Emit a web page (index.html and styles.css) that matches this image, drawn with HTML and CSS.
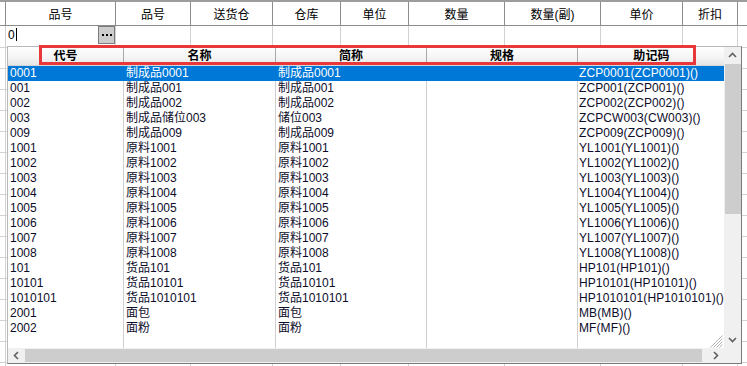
FILE: index.html
```html
<!DOCTYPE html>
<html lang="zh-CN">
<head>
<meta charset="utf-8">
<title>选择品号</title>
<link rel="stylesheet" href="styles.css">
</head>
<body>
<div class="sheet">
  <div class="row head">
    <div class="c gut"></div>
    <div class="c">品号</div>
    <div class="c">品号</div>
    <div class="c">送货仓</div>
    <div class="c">仓库</div>
    <div class="c">单位</div>
    <div class="c">数量</div>
    <div class="c">数量(副)</div>
    <div class="c">单价</div>
    <div class="c">折扣</div>
    <div class="c"></div>
  </div>
  <div class="row inp">
    <div class="c gut"></div>
    <div class="c edit"><span class="val">0</span><span class="caret"></span><span class="btn"><svg width="15" height="16" viewBox="0 0 15 16"><rect x="3" y="7" width="2" height="2" fill="#000"/><rect x="7" y="7" width="2" height="2" fill="#000"/><rect x="11" y="7" width="2" height="2" fill="#000"/></svg></span></div>
    <div class="c"></div><div class="c"></div><div class="c"></div><div class="c"></div><div class="c"></div><div class="c"></div><div class="c"></div><div class="c"></div><div class="c"></div>
  </div>
  <div class="row"><div class="c gut"></div><div class="c"></div><div class="c"></div><div class="c"></div><div class="c"></div><div class="c"></div><div class="c"></div><div class="c"></div><div class="c"></div><div class="c"></div><div class="c"></div></div>
  <div class="row"><div class="c gut"></div><div class="c"></div><div class="c"></div><div class="c"></div><div class="c"></div><div class="c"></div><div class="c"></div><div class="c"></div><div class="c"></div><div class="c"></div><div class="c"></div></div>
  <div class="row"><div class="c gut"></div><div class="c"></div><div class="c"></div><div class="c"></div><div class="c"></div><div class="c"></div><div class="c"></div><div class="c"></div><div class="c"></div><div class="c"></div><div class="c"></div></div>
  <div class="row"><div class="c gut"></div><div class="c"></div><div class="c"></div><div class="c"></div><div class="c"></div><div class="c"></div><div class="c"></div><div class="c"></div><div class="c"></div><div class="c"></div><div class="c"></div></div>
  <div class="row"><div class="c gut"></div><div class="c"></div><div class="c"></div><div class="c"></div><div class="c"></div><div class="c"></div><div class="c"></div><div class="c"></div><div class="c"></div><div class="c"></div><div class="c"></div></div>
  <div class="row"><div class="c gut"></div><div class="c"></div><div class="c"></div><div class="c"></div><div class="c"></div><div class="c"></div><div class="c"></div><div class="c"></div><div class="c"></div><div class="c"></div><div class="c"></div></div>
  <div class="row"><div class="c gut"></div><div class="c"></div><div class="c"></div><div class="c"></div><div class="c"></div><div class="c"></div><div class="c"></div><div class="c"></div><div class="c"></div><div class="c"></div><div class="c"></div></div>
  <div class="row"><div class="c gut"></div><div class="c"></div><div class="c"></div><div class="c"></div><div class="c"></div><div class="c"></div><div class="c"></div><div class="c"></div><div class="c"></div><div class="c"></div><div class="c"></div></div>
  <div class="row"><div class="c gut"></div><div class="c"></div><div class="c"></div><div class="c"></div><div class="c"></div><div class="c"></div><div class="c"></div><div class="c"></div><div class="c"></div><div class="c"></div><div class="c"></div></div>
  <div class="row"><div class="c gut"></div><div class="c"></div><div class="c"></div><div class="c"></div><div class="c"></div><div class="c"></div><div class="c"></div><div class="c"></div><div class="c"></div><div class="c"></div><div class="c"></div></div>
  <div class="row"><div class="c gut"></div><div class="c"></div><div class="c"></div><div class="c"></div><div class="c"></div><div class="c"></div><div class="c"></div><div class="c"></div><div class="c"></div><div class="c"></div><div class="c"></div></div>
  <div class="row"><div class="c gut"></div><div class="c"></div><div class="c"></div><div class="c"></div><div class="c"></div><div class="c"></div><div class="c"></div><div class="c"></div><div class="c"></div><div class="c"></div><div class="c"></div></div>
  <div class="row"><div class="c gut"></div><div class="c"></div><div class="c"></div><div class="c"></div><div class="c"></div><div class="c"></div><div class="c"></div><div class="c"></div><div class="c"></div><div class="c"></div><div class="c"></div></div>
  <div class="row"><div class="c gut"></div><div class="c"></div><div class="c"></div><div class="c"></div><div class="c"></div><div class="c"></div><div class="c"></div><div class="c"></div><div class="c"></div><div class="c"></div><div class="c"></div></div>
  <div class="row"><div class="c gut"></div><div class="c"></div><div class="c"></div><div class="c"></div><div class="c"></div><div class="c"></div><div class="c"></div><div class="c"></div><div class="c"></div><div class="c"></div><div class="c"></div></div>
  <div class="row"><div class="c gut"></div><div class="c"></div><div class="c"></div><div class="c"></div><div class="c"></div><div class="c"></div><div class="c"></div><div class="c"></div><div class="c"></div><div class="c"></div><div class="c"></div></div>

  <div class="drop">
    <div class="list">
      <div class="dhead">
        <div class="dc k1">代号</div><div class="dc k2">名称</div><div class="dc k3">简称</div><div class="dc k4">规格</div><div class="dc k5">助记码</div>
      </div>
      <div class="drow sel"><div class="dc k1">0001</div><div class="dc k2">制成品0001</div><div class="dc k3">制成品0001</div><div class="dc k4"></div><div class="dc k5">ZCP0001(ZCP0001)()</div></div>
      <div class="drow"><div class="dc k1">001</div><div class="dc k2">制成品001</div><div class="dc k3">制成品001</div><div class="dc k4"></div><div class="dc k5">ZCP001(ZCP001)()</div></div>
      <div class="drow"><div class="dc k1">002</div><div class="dc k2">制成品002</div><div class="dc k3">制成品002</div><div class="dc k4"></div><div class="dc k5">ZCP002(ZCP002)()</div></div>
      <div class="drow"><div class="dc k1">003</div><div class="dc k2">制成品储位003</div><div class="dc k3">储位003</div><div class="dc k4"></div><div class="dc k5">ZCPCW003(CW003)()</div></div>
      <div class="drow"><div class="dc k1">009</div><div class="dc k2">制成品009</div><div class="dc k3">制成品009</div><div class="dc k4"></div><div class="dc k5">ZCP009(ZCP009)()</div></div>
      <div class="drow"><div class="dc k1">1001</div><div class="dc k2">原料1001</div><div class="dc k3">原料1001</div><div class="dc k4"></div><div class="dc k5">YL1001(YL1001)()</div></div>
      <div class="drow"><div class="dc k1">1002</div><div class="dc k2">原料1002</div><div class="dc k3">原料1002</div><div class="dc k4"></div><div class="dc k5">YL1002(YL1002)()</div></div>
      <div class="drow"><div class="dc k1">1003</div><div class="dc k2">原料1003</div><div class="dc k3">原料1003</div><div class="dc k4"></div><div class="dc k5">YL1003(YL1003)()</div></div>
      <div class="drow"><div class="dc k1">1004</div><div class="dc k2">原料1004</div><div class="dc k3">原料1004</div><div class="dc k4"></div><div class="dc k5">YL1004(YL1004)()</div></div>
      <div class="drow"><div class="dc k1">1005</div><div class="dc k2">原料1005</div><div class="dc k3">原料1005</div><div class="dc k4"></div><div class="dc k5">YL1005(YL1005)()</div></div>
      <div class="drow"><div class="dc k1">1006</div><div class="dc k2">原料1006</div><div class="dc k3">原料1006</div><div class="dc k4"></div><div class="dc k5">YL1006(YL1006)()</div></div>
      <div class="drow"><div class="dc k1">1007</div><div class="dc k2">原料1007</div><div class="dc k3">原料1007</div><div class="dc k4"></div><div class="dc k5">YL1007(YL1007)()</div></div>
      <div class="drow"><div class="dc k1">1008</div><div class="dc k2">原料1008</div><div class="dc k3">原料1008</div><div class="dc k4"></div><div class="dc k5">YL1008(YL1008)()</div></div>
      <div class="drow"><div class="dc k1">101</div><div class="dc k2">货品101</div><div class="dc k3">货品101</div><div class="dc k4"></div><div class="dc k5">HP101(HP101)()</div></div>
      <div class="drow"><div class="dc k1">10101</div><div class="dc k2">货品10101</div><div class="dc k3">货品10101</div><div class="dc k4"></div><div class="dc k5">HP10101(HP10101)()</div></div>
      <div class="drow"><div class="dc k1">1010101</div><div class="dc k2">货品1010101</div><div class="dc k3">货品1010101</div><div class="dc k4"></div><div class="dc k5">HP1010101(HP1010101)()</div></div>
      <div class="drow"><div class="dc k1">2001</div><div class="dc k2">面包</div><div class="dc k3">面包</div><div class="dc k4"></div><div class="dc k5">MB(MB)()</div></div>
      <div class="drow"><div class="dc k1">2002</div><div class="dc k2">面粉</div><div class="dc k3">面粉</div><div class="dc k4"></div><div class="dc k5">MF(MF)()</div></div>
      <div class="fill"><div class="dc k1"></div><div class="dc k2"></div><div class="dc k3"></div><div class="dc k4"></div><div class="dc k5"></div></div>
      <svg class="grip" width="15" height="15" viewBox="0 0 15 15"><g stroke="#b4b4b4" stroke-width="1"><line x1="14.5" y1="2.5" x2="2.5" y2="14.5"/><line x1="14.5" y1="5.5" x2="5.5" y2="14.5"/><line x1="14.5" y1="8.5" x2="8.5" y2="14.5"/><line x1="14.5" y1="11.5" x2="11.5" y2="14.5"/></g></svg>
    </div>
    <div class="vscroll">
      <div class="arr"><svg width="17" height="17" viewBox="0 0 17 17"><polyline points="5,10 8.5,6.5 12,10" fill="none" stroke="#606060" stroke-width="1.6"/></svg></div>
      <div class="vtrack"><div class="vthumb"></div></div>
      <div class="arr"><svg width="17" height="17" viewBox="0 0 17 17"><polyline points="5,7 8.5,10.5 12,7" fill="none" stroke="#606060" stroke-width="1.6"/></svg></div>
    </div>
    <div class="hscroll">
      <div class="harr"><svg width="17" height="15" viewBox="0 0 17 15"><polyline points="10,4 6.5,7.5 10,11" fill="none" stroke="#606060" stroke-width="1.6"/></svg></div>
      <div class="hthumb"></div>
      <div class="harr"><svg width="17" height="15" viewBox="0 0 17 15"><polyline points="7,4 10.5,7.5 7,11" fill="none" stroke="#606060" stroke-width="1.6"/></svg></div>
    </div>
    <div class="corner"></div>
  </div>
  <div class="mark"></div>
</div>
</body>
</html>
```

FILE: styles.css
```css
* { box-sizing: border-box; margin: 0; padding: 0; }
html, body { width: 747px; height: 366px; overflow: hidden; background: #fff; }
body {
  font-family: "Liberation Sans", "Noto Sans CJK SC", sans-serif;
  font-size: 12px;
  color: #000;
}
.sheet {
  position: relative;
  width: 747px;
  height: 366px;
  border-top: 2px solid #9c9c9c;
  overflow: hidden;
}
.row {
  display: grid;
  grid-template-columns: 5px 110px 75px 82px 68px 68px 96px 96px 82px 55px 10px;
  height: 21px;
}
.row > .c {
  border-left: 1px solid #d2d2d2;
  border-bottom: 1px solid #d2d2d2;
}
.row > .c.gut { border-left: 0; }
.head { height: 24px; }
.head > .c {
  border-left-color: #8c8c8c;
  border-bottom-color: #8c8c8c;
  display: flex;
  align-items: center;
  justify-content: center;
  padding-top: 3px;
  line-height: 14px;
}
.inp { height: 22px; }
.edit {
  display: flex;
  align-items: flex-start;
  padding-left: 2px;
}
.val { line-height: 15px; margin-top: 2px; }
.caret {
  width: 1px;
  height: 13px;
  margin-top: 2px;
  margin-left: 1px;
  background: #000;
}
.btn {
  margin-left: auto;
  width: 17px;
  height: 18px;
  background: #cdcdcd;
  border: 1px solid #7c7c7c;
  display: flex;
}

/* dropdown */
.drop {
  position: absolute;
  left: 7px;
  top: 44px;
  width: 735px;
  height: 318px;
  border: 1px solid #7a7a7a;
  border-left-color: #b8b8b8;
  border-top-color: #b8b8b8;
  background: #fff;
  display: grid;
  grid-template-columns: 1fr 17px;
  grid-template-rows: 1fr 15px;
}
.list {
  position: relative;
  display: flex;
  flex-direction: column;
  overflow: hidden;
}
.dhead, .drow, .fill { display: flex; flex: none; }
.dhead {
  height: 19px;
  background: linear-gradient(#ffffff, #f4f4f4 60%, #e6e6e6);
  border-bottom: 1px solid #d6d6d6;
}
.dhead .dc {
  font-weight: bold;
  text-align: center;
  line-height: 19px;
  padding: 0;
  border-right: 1px solid #a8a8a8;
}
.dhead .dc.k5 { border-right: 0; }
.drow { height: 15px; }
.dc {
  flex: none;
  line-height: 15px;
  padding-left: 2px;
  white-space: nowrap;
  overflow: hidden;
  border-right: 1px solid #cfcfcf;
}
.k1 { width: 116px; }
.k2 { width: 152px; }
.k3 { width: 151px; }
.k4 { width: 151px; }
.k5 { width: 147px; border-right: 0; padding-left: 1px; letter-spacing: 0.1px; }
.drow .dc { color: #0c0c2a; }
.drow.sel { background: #0078d7; }
.drow.sel .dc { color: #fff; border-right-color: #0078d7; }
.fill { flex: 1; }
.grip { position: absolute; right: 1px; bottom: 0; }

.vscroll {
  background: #f0f0f0;
  display: flex;
  flex-direction: column;
}
.arr { height: 17px; flex: none; display: flex; }
.vtrack { flex: 1; display: flex; flex-direction: column; }
.vthumb { height: 150px; margin-left: 1px; background: #cdcdcd; }

.hscroll {
  background: #f0f0f0;
  display: flex;
}
.harr { width: 17px; flex: none; display: flex; }
.hthumb { flex: 1; margin: 1px 5px 1px 0; background: #cdcdcd; }
.corner { background: #f0f0f0; }

/* annotation rectangle */
.mark {
  position: absolute;
  left: 39px;
  top: 43px;
  width: 657px;
  height: 20px;
  border: 3px solid #e8383b;
}
```
